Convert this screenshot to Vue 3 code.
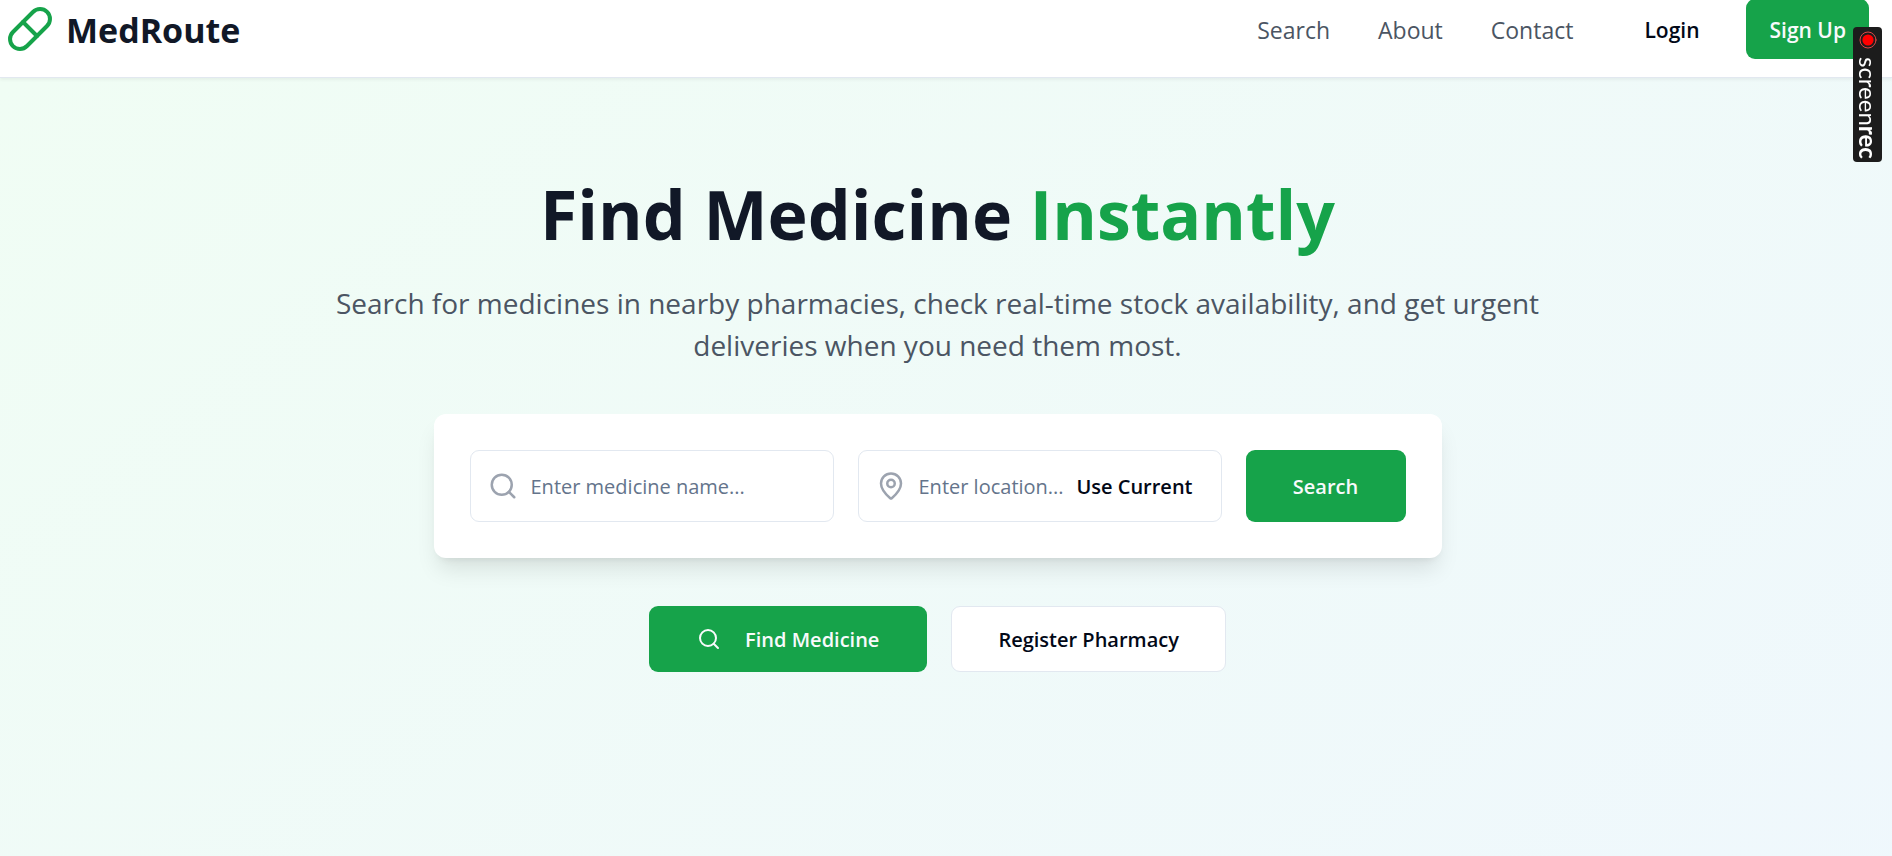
<template>
  <div class="page">
    <header class="header">
      <a class="brand" href="#">
        <svg class="brand-icon" viewBox="0 0 24 24" aria-hidden="true">
          <path d="m10.5 20.5 10-10a4.95 4.95 0 1 0-7-7l-10 10a4.95 4.95 0 1 0 7 7Z" />
          <path d="m8.5 8.5 7 7" />
        </svg>
        <span class="brand-name">MedRoute</span>
      </a>
      <nav class="nav">
        <a v-for="item in links" :key="item" class="nav-link" href="#">{{ item }}</a>
        <button class="btn btn-nav" type="button">Login</button>
        <button class="btn btn-nav btn-primary" type="button">Sign Up</button>
      </nav>
    </header>

    <main class="hero">
      <h1 class="title">Find Medicine <span class="accent">Instantly</span></h1>
      <p class="subtitle">
        Search for medicines in nearby pharmacies, check real-time stock availability, and get urgent
        deliveries when you need them most.
      </p>

      <form class="search-card" @submit.prevent>
        <label class="field">
          <svg class="field-icon" viewBox="0 0 24 24" aria-hidden="true">
            <circle cx="11" cy="11" r="8" />
            <path d="m21 21-4.3-4.3" />
          </svg>
          <input v-model="medicine" type="text" placeholder="Enter medicine name..." aria-label="Medicine name" />
        </label>
        <div class="field">
          <svg class="field-icon" viewBox="0 0 24 24" aria-hidden="true">
            <path d="M20 10c0 4.993-5.539 10.193-7.399 11.799a1 1 0 0 1-1.202 0C9.539 20.193 4 14.993 4 10a8 8 0 0 1 16 0" />
            <circle cx="12" cy="10" r="3" />
          </svg>
          <input v-model="location" type="text" placeholder="Enter location..." aria-label="Location" />
          <button class="btn btn-current" type="button">Use Current</button>
        </div>
        <button class="btn btn-primary btn-search" type="submit">Search</button>
      </form>

      <div class="actions">
        <button class="btn btn-primary btn-large" type="button">
          <svg class="btn-icon" viewBox="0 0 24 24" aria-hidden="true">
            <circle cx="11" cy="11" r="8" />
            <path d="m21 21-4.3-4.3" />
          </svg>
          Find Medicine
        </button>
        <button class="btn btn-outline btn-large" type="button">Register Pharmacy</button>
      </div>
    </main>

    <div class="recorder">
      <svg class="recorder-dot" viewBox="0 0 18 18" aria-hidden="true">
        <circle class="recorder-ring" cx="9" cy="9" r="8" />
        <circle class="recorder-core" cx="9" cy="9" r="5.6" />
      </svg>
      <span class="recorder-text">screen<b>rec</b></span>
    </div>
  </div>
</template>

<script setup>
import { ref } from 'vue'
const links = ['Search', 'About', 'Contact']
const medicine = ref('')
const location = ref('')
</script>

<style>
body {
  margin: 0;
}
</style>

<style scoped>
.page {
  min-height: 100vh;
  display: flex;
  flex-direction: column;
  font-family: "Open Sans", "Noto Sans", sans-serif;
  color: #020817;
}
.page * {
  box-sizing: border-box;
}
svg {
  flex-shrink: 0;
  fill: none;
  stroke: currentColor;
  stroke-width: 2;
  stroke-linecap: round;
  stroke-linejoin: round;
}
.header {
  position: relative;
  display: flex;
  justify-content: space-between;
  align-items: center;
  padding: 0 23px 19px 6px;
  background: #fff;
  border-bottom: 1px solid #e2e8f0;
  box-shadow: 0 2px 3px rgba(0, 0, 0, 0.05);
}
.brand {
  display: flex;
  align-items: center;
  gap: 12px;
  color: #111827;
  text-decoration: none;
}
.brand-icon {
  width: 48px;
  height: 48px;
  color: #16a34a;
}
.brand-name {
  padding-top: 2px;
  font-size: 34px;
  line-height: 46px;
  font-weight: 700;
}
.nav {
  display: flex;
  align-items: center;
  height: 58px;
}
.nav-link {
  padding-top: 2px;
  margin-right: 48px;
  font-size: 23px;
  color: #4b5563;
  text-decoration: none;
}
.btn {
  display: flex;
  align-items: center;
  justify-content: center;
  border: none;
  border-radius: 9px;
  font-family: inherit;
  font-size: 20px;
  font-weight: 600;
  white-space: nowrap;
  cursor: pointer;
  color: #020817;
  background: transparent;
}
.btn-nav {
  height: 60px;
  padding: 2px 23px 0;
  font-size: 21px;
}
.btn-nav + .btn-nav {
  margin-left: 24px;
}
.btn-primary {
  color: #f8fafc;
  background: #16a34a;
}
.hero {
  flex: 1;
  display: flex;
  flex-direction: column;
  align-items: center;
  padding: 96px 17px 96px 0;
  background: linear-gradient(to bottom right, #f0fdf4, #eff6ff) no-repeat;
  background-size: 100% 190%;
}
.title {
  margin: 0 0 28px;
  font-size: 68px;
  line-height: 80px;
  font-weight: 700;
  text-align: center;
  color: #111827;
}
.accent {
  color: #16a34a;
}
.subtitle {
  max-width: 1260px;
  margin: 0 0 48px;
  font-size: 28px;
  line-height: 42px;
  text-align: center;
  color: #4b5563;
}
.search-card {
  display: flex;
  gap: 24px;
  width: 100%;
  max-width: 1008px;
  padding: 36px;
  margin-bottom: 48px;
  border-radius: 12px;
  background: #fff;
  box-shadow: 0 15px 22px -4px rgba(0, 0, 0, 0.1), 0 6px 9px -6px rgba(0, 0, 0, 0.1);
}
.field {
  flex: 1 1 0;
  min-width: 0;
  display: flex;
  align-items: center;
  height: 72px;
  padding: 0 4px 0 17px;
  border: 1px solid #e2e8f0;
  border-radius: 9px;
}
.field-icon {
  width: 30px;
  height: 30px;
  color: #9ca3af;
}
.field input {
  flex: 1;
  min-width: 0;
  padding: 0 0 0 13px;
  border: none;
  outline: none;
  background: transparent;
  font-family: inherit;
  font-size: 20px;
  color: #020817;
}
.field input::placeholder {
  color: #64748b;
  opacity: 1;
}
.btn-current {
  height: 54px;
  padding: 0 24px 0 12px;
}
.btn-search {
  width: 160px;
}
.actions {
  display: flex;
  gap: 24px;
}
.btn-large {
  height: 66px;
  padding: 0 48px;
}
.btn-outline {
  padding: 0 46px;
  border: 1px solid #e2e8f0;
  background: #fff;
}
.btn-icon {
  width: 24px;
  height: 24px;
  margin-right: 24px;
}
.recorder {
  position: fixed;
  top: 27px;
  right: 10px;
  z-index: 10;
  display: flex;
  flex-direction: column;
  align-items: center;
  gap: 8px;
  width: 29px;
  height: 135px;
  padding-top: 4px;
  border-radius: 4px;
  background: #1c1c1c;
  color: #fff;
}
.recorder-dot {
  width: 18px;
  height: 18px;
}
.recorder-ring {
  stroke: #e04848;
  stroke-width: 1;
}
.recorder-core {
  fill: #ff0000;
  stroke: none;
}
.recorder-text {
  writing-mode: vertical-rl;
  font-family: Lato, "Open Sans", sans-serif;
  font-size: 24px;
  line-height: 28px;
}
.recorder-text b {
  font-weight: 700;
}
</style>
